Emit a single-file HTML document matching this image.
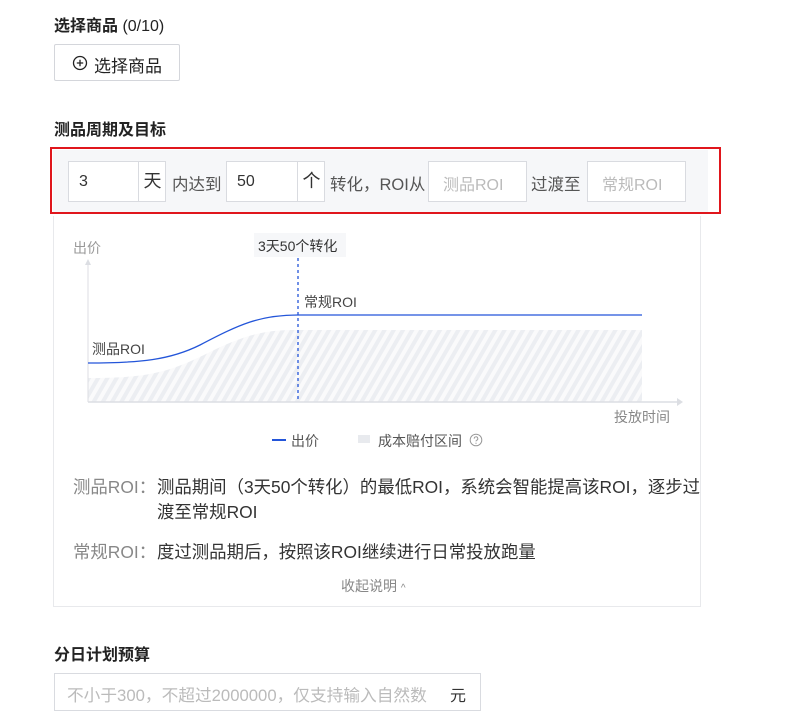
<!DOCTYPE html>
<html><head><meta charset="utf-8"><style>
*{box-sizing:border-box;margin:0;padding:0}
body{width:788px;height:722px;background:#fff;font-family:"Liberation Sans","Noto Sans CJK SC",sans-serif;color:#333;position:relative;overflow:hidden}
.a{position:absolute;white-space:nowrap}
.h{font-size:16px;font-weight:bold;color:#222}
.inp{position:absolute;top:161px;height:41px;border:1px solid #d9dbe0;background:#fff;font-size:16px}
.inp .v{position:absolute;left:10px;top:11px;color:#333}
.inp .s{position:absolute;top:0;height:39px;border-left:1px solid #d9dbe0;text-align:center;line-height:39px;font-size:18px;color:#333}
.inp .p{position:absolute;left:14px;top:9px;color:#bbb}
.lbl{position:absolute;top:171px;font-size:16.5px;color:#555}
.t{font-size:17.4px;color:#333}
.g{color:#888}
</style></head><body>
<div class="a h" style="left:54px;top:12px">选择商品 <span style="font-weight:normal">(0/10)</span></div>
<div class="a" style="left:54px;top:44px;width:126px;height:37px;border:1px solid #d4d6db;border-radius:2px"></div>
<svg class="a" style="left:72px;top:55px" width="16" height="16" viewBox="0 0 16 16"><circle cx="8" cy="8" r="6.5" fill="none" stroke="#222" stroke-width="1.3"/><path d="M8 4.8v6.4M4.8 8h6.4" stroke="#222" stroke-width="1.3"/></svg>
<div class="a" style="left:94px;top:52px;font-size:17px;color:#222">选择商品</div>
<div class="a h" style="left:54px;top:116px">测品周期及目标</div>

<div class="a" style="left:53px;top:150px;width:655px;height:62px;background:#f6f7f9"></div>
<div class="a" style="left:50px;top:147px;width:671px;height:67px;border:2px solid #e0161c"></div>
<div class="inp" style="left:68px;width:98px"><span class="v">3</span><span class="s" style="left:69px;width:28px">天</span></div>
<div class="lbl" style="left:172px">内达到</div>
<div class="inp" style="left:226px;width:99px"><span class="v">50</span><span class="s" style="left:70px;width:28px">个</span></div>
<div class="lbl" style="left:330px">转化，ROI从</div>
<div class="inp" style="left:428px;width:99px"><span class="p">测品ROI</span></div>
<div class="lbl" style="left:531px">过渡至</div>
<div class="inp" style="left:587px;width:99px"><span class="p">常规ROI</span></div>

<div class="a" style="left:53px;top:216px;width:648px;height:391px;border:1px solid #e8e9ec;border-top:none"></div>
<svg class="a" style="left:53px;top:216px" width="648" height="210" viewBox="53 216 648 210">
<defs><pattern id="hp" width="8" height="8" patternUnits="userSpaceOnUse" patternTransform="rotate(30)"><rect width="8" height="8" fill="#fafafb"/><rect width="4" height="8" fill="#eceef2"/></pattern></defs>
<path d="M88 378 C150 378 170 372 210 352 C250 332 270 330 298 330 L642 330 L642 402 L88 402Z" fill="url(#hp)"/>
<rect x="254" y="233" width="92" height="24" fill="#f6f7f9"/>
<path d="M88 402V262" stroke="#dcdee3" stroke-width="1"/>
<path d="M85 265l3-6 3 6z" fill="#dcdee3"/>
<path d="M88 402H679" stroke="#dcdee3" stroke-width="1.5"/>
<path d="M677 398l6 4-6 4z" fill="#dcdee3"/>
<path d="M88 363 C140 363 170 360 200 345 C240 324 260 315 298 315 L642 315" fill="none" stroke="#2355d9" stroke-width="1.3"/>
<path d="M298 258V402" stroke="#2355d9" stroke-width="1.3" stroke-dasharray="3 3"/>
</svg>
<div class="a" style="left:258px;top:236px;font-size:14px;color:#333">3天50个转化</div>
<div class="a" style="left:73px;top:238px;font-size:14px;color:#999">出价</div>
<div class="a" style="left:304px;top:292px;font-size:14px;color:#444">常规ROI</div>
<div class="a" style="left:92px;top:339px;font-size:14px;color:#444">测品ROI</div>
<div class="a" style="left:614px;top:407px;font-size:14px;color:#888">投放时间</div>

<div class="a" style="left:272px;top:439px;width:14px;height:2px;background:#2355d9"></div>
<div class="a" style="left:291px;top:431px;font-size:14px;color:#555">出价</div>
<div class="a" style="left:358px;top:435px;width:12px;height:8px;background:#e8eaee"></div>
<div class="a" style="left:378px;top:431px;font-size:14px;color:#555">成本赔付区间</div>
<svg class="a" style="left:469px;top:433px" width="14" height="14" viewBox="0 0 14 14"><circle cx="7" cy="7" r="5.8" fill="none" stroke="#999" stroke-width="1"/><path d="M5.2 5.6a1.8 1.8 0 1 1 2.4 1.7c-.5.2-.6.5-.6 1.1" fill="none" stroke="#999" stroke-width="1"/><circle cx="7" cy="10.2" r=".6" fill="#999"/></svg>

<div class="a t g" style="left:73px;top:474px">测品ROI：</div>
<div class="a t" style="left:157px;top:474px">测品期间（3天50个转化）的最低ROI，系统会智能提高该ROI，逐步过</div>
<div class="a t" style="left:157px;top:499px">渡至常规ROI</div>
<div class="a t g" style="left:73px;top:539px">常规ROI：</div>
<div class="a t" style="left:157px;top:539px">度过测品期后，按照该ROI继续进行日常投放跑量</div>
<div class="a" style="left:341px;top:576px;font-size:14px;color:#888">收起说明 <span style="font-size:10px">^</span></div>

<div class="a h" style="left:54px;top:641px">分日计划预算</div>
<div class="a" style="left:54px;top:673px;width:427px;height:38px;border:1px solid #d9dbe0"></div>
<div class="a" style="left:67px;top:682px;font-size:16.7px;color:#bbb">不小于300，不超过2000000，仅支持输入自然数</div>
<div class="a" style="left:450px;top:682px;font-size:16px;color:#333">元</div>
</body></html>
